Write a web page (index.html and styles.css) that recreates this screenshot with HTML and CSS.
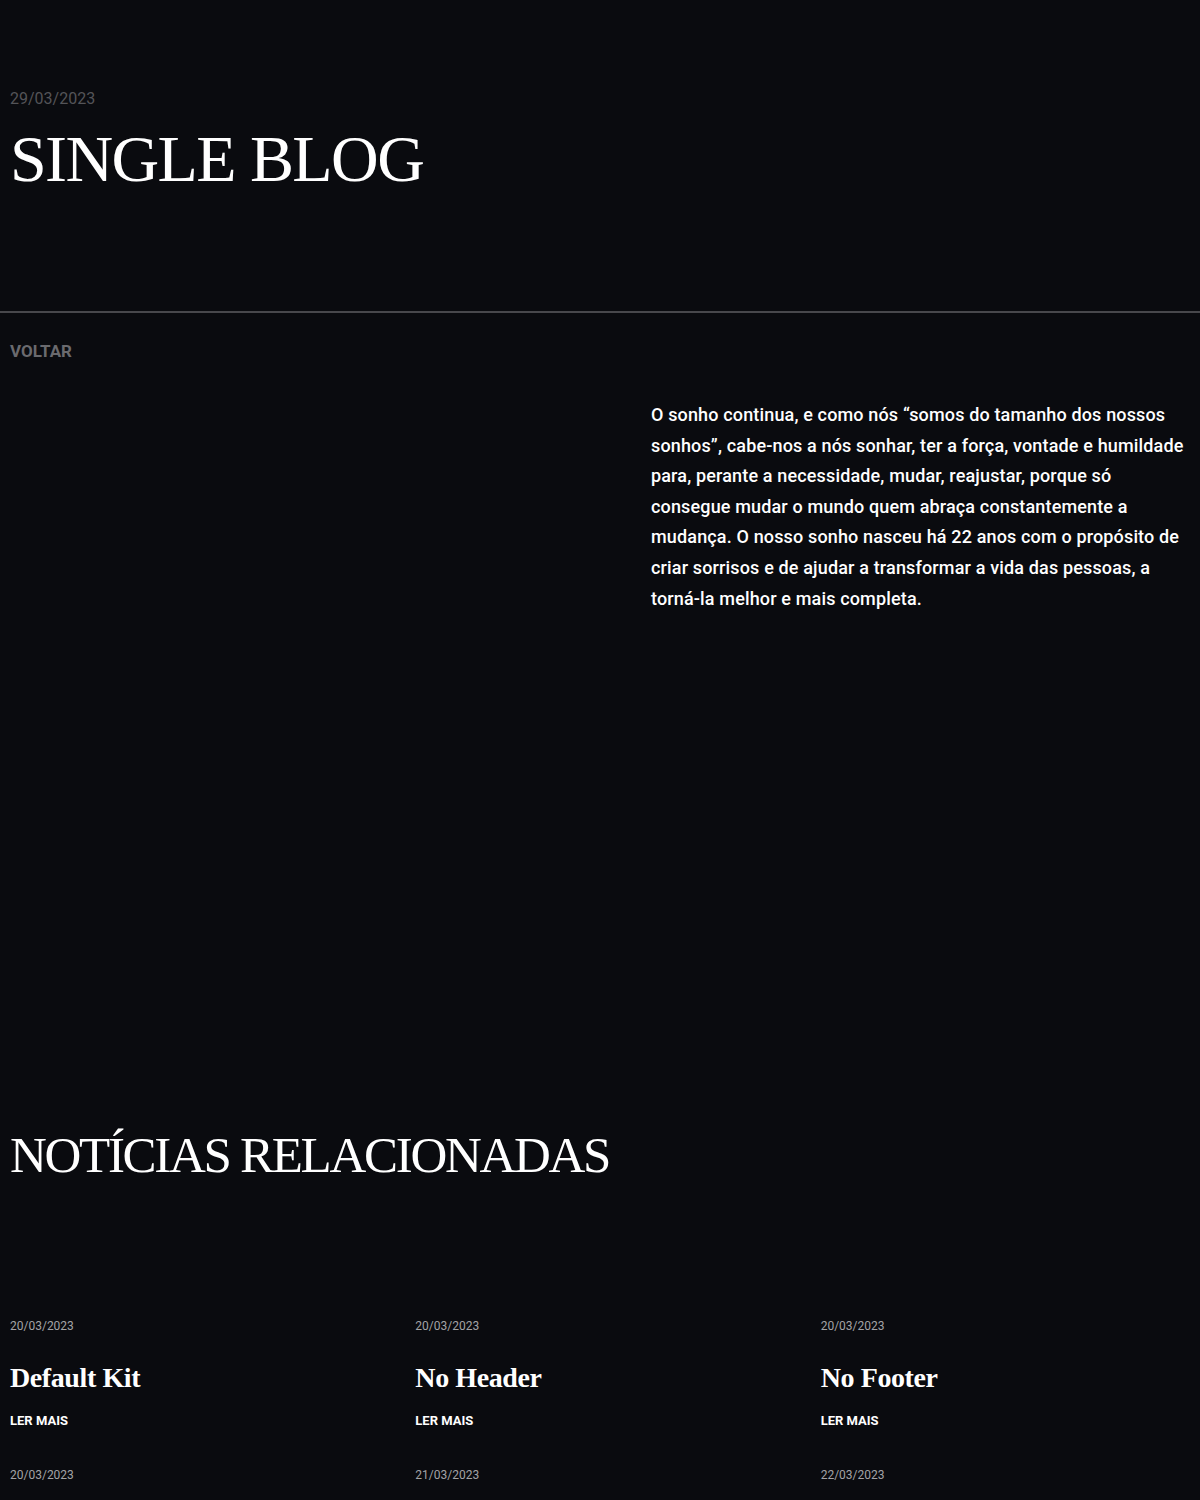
FILE: index.html
```html
<!DOCTYPE html>
<html lang="pt">
<head>
<meta charset="utf-8">
<title>Single Blog</title>
<link rel="stylesheet" href="styles.css">
</head>
<body>
<header class="hero">
  <div class="hero-date">29/03/2023</div>
  <h1 class="hero-title">SINGLE BLOG</h1>
</header>
<hr class="divider">
<main class="post">
  <a class="back" href="#">VOLTAR</a>
  <div class="post-body">
    <div class="post-media"></div>
    <p class="post-text">O sonho continua, e como nós “somos do tamanho dos nossos sonhos”, cabe-nos a nós sonhar, ter a força, vontade e humildade para, perante a necessidade, mudar, reajustar, porque só consegue mudar o mundo quem abraça constantemente a mudança. O nosso sonho nasceu há 22 anos com o propósito de criar sorrisos e de ajudar a transformar a vida das pessoas, a torná-la melhor e mais completa.</p>
  </div>
</main>
<section class="related">
  <h2 class="related-title">NOTÍCIAS RELACIONADAS</h2>
  <div class="cards">
    <article class="card">
      <div class="card-date">20/03/2023</div>
      <h3 class="card-title">Default Kit</h3>
      <a class="card-link" href="#">LER MAIS</a>
    </article>
    <article class="card">
      <div class="card-date">20/03/2023</div>
      <h3 class="card-title">No Header</h3>
      <a class="card-link" href="#">LER MAIS</a>
    </article>
    <article class="card">
      <div class="card-date">20/03/2023</div>
      <h3 class="card-title">No Footer</h3>
      <a class="card-link" href="#">LER MAIS</a>
    </article>
    <article class="card">
      <div class="card-date">20/03/2023</div>
    </article>
    <article class="card">
      <div class="card-date">21/03/2023</div>
    </article>
    <article class="card">
      <div class="card-date">22/03/2023</div>
    </article>
  </div>
</section>
</body>
</html>
```

FILE: styles.css
```css
* { box-sizing: border-box; }
html, body {
  margin: 0;
  padding: 0;
  background: #0a0b0f;
  color: #ffffff;
  font-family: Roboto, "Liberation Sans", Arial, sans-serif;
}
a { text-decoration: none; }

.hero {
  padding: 89px 10px 0;
  height: 311px;
}
.hero-date {
  font-size: 16px;
  line-height: 20px;
  color: #545458;
}
.hero-title {
  margin: 14px 0 0;
  font-family: "Liberation Serif", "Times New Roman", serif;
  font-weight: 400;
  font-size: 66px;
  line-height: 72px;
  letter-spacing: -1.6px;
  color: #ffffff;
}

.divider {
  margin: 0;
  border: 0;
  height: 2px;
  background: #48484c;
}

.post {
  padding: 28px 10px 0;
}
.back {
  display: block;
  font-size: 17px;
  font-weight: 700;
  line-height: 20px;
  color: #6a6a6e;
}
.post-body {
  display: grid;
  grid-template-columns: 641px 1fr;
  margin-top: 39px;
  min-height: 700px;
}
.post-text {
  margin: 0;
  font-size: 18px;
  font-weight: 500;
  line-height: 30.6px;
  letter-spacing: 0.15px;
  color: #ffffff;
}

.related {
  padding-top: 25px;
}
.related-title {
  margin: 0;
  padding: 0 10px;
  font-family: "Liberation Serif", "Times New Roman", serif;
  font-weight: 400;
  font-size: 51px;
  line-height: 60px;
  letter-spacing: -2.3px;
  color: #ffffff;
}
.cards {
  display: grid;
  grid-template-columns: repeat(3, 1fr);
  column-gap: 36px;
  padding: 0 10px;
  margin-top: 133px;
}
.card {
  height: 149px;
}
.card-date {
  font-size: 12px;
  line-height: 16px;
  color: #a3a3a6;
}
.card-title {
  margin: 27px 0 0;
  font-family: "Liberation Serif", "Times New Roman", serif;
  font-weight: 700;
  font-size: 28px;
  line-height: 34px;
  letter-spacing: -0.4px;
  color: #ffffff;
}
.card-link {
  display: block;
  margin-top: 18px;
  font-size: 13px;
  font-weight: 700;
  line-height: 16px;
  color: #ffffff;
}
```
